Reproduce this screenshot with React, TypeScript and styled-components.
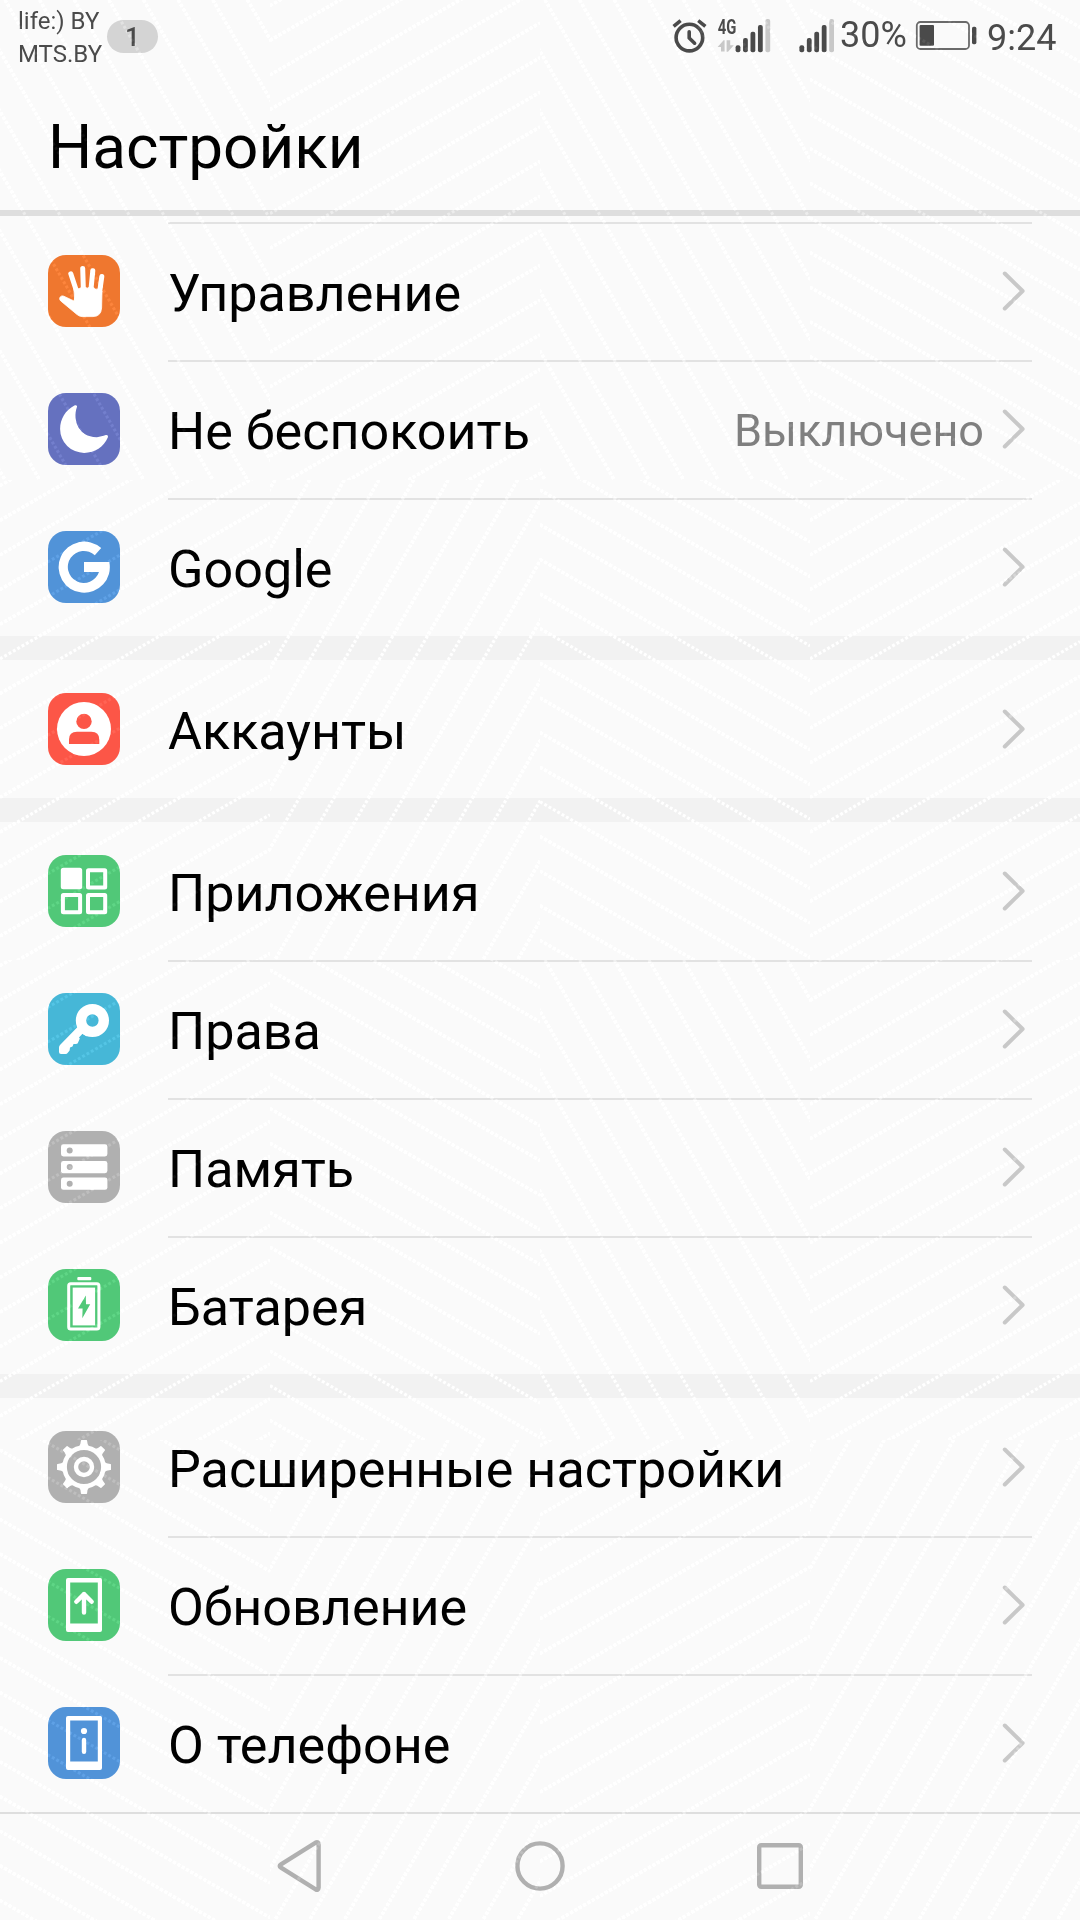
import React from "react";
import styled, { createGlobalStyle } from "styled-components";

const GlobalStyle = createGlobalStyle`
  html, body { margin: 0; padding: 0; background: #fafafa; }
  * { box-sizing: border-box; }
  svg { display: block; flex: none; }
`;

const Screen = styled.div`
  position: relative;
  width: 1080px;
  height: 1920px;
  overflow: hidden;
  display: flex;
  flex-direction: column;
  background: #fafafa;
  font-family: Roboto, "Noto Sans", sans-serif;
  color: #000;
  isolation: isolate;
`;

const StatusBar = styled.header`
  display: flex;
  height: 72px;
  padding: 0 24px 0 18px;
  color: #4a4a4a;
`;

const Carriers = styled.div`
  display: flex;
  flex-direction: column;
  width: 89px;
  padding-top: 5px;
  font-size: 24px;
  line-height: 33px;
  white-space: nowrap;
`;

const CountBadge = styled.div`
  width: 51px;
  height: 33px;
  margin-top: 20px;
  border-radius: 17px;
  background: #d4d4d4;
  font-size: 26px;
  line-height: 34px;
  font-weight: 500;
  text-align: center;
`;

const StatusIcons = styled.div`
  display: flex;
  align-items: flex-start;
  margin-left: auto;
`;

const StatusText = styled.span<{ $top: number; $width: number; $indent?: number }>`
  width: ${(p) => p.$width}px;
  padding-top: ${(p) => p.$top}px;
  padding-left: ${(p) => p.$indent ?? 0}px;
  font-size: 36px;
  line-height: 42px;
  white-space: nowrap;
`;

const TitleBar = styled.div`
  height: 144px;
  padding: 39px 48px 0;
  border-bottom: 6px solid #dedede;
`;

const Title = styled.h1`
  margin: 0;
  font-size: 62px;
  line-height: 72px;
  font-weight: 400;
`;

const List = styled.main`
  display: flex;
  flex-direction: column;
  gap: 24px;
  height: 1596px;
  padding-top: 6px;
  background: linear-gradient(#fafafa, #fafafa) top / 100% 6px no-repeat #f2f2f2;
`;

const Group = styled.section`
  background: #fafafa;
`;

const Row = styled.div`
  display: flex;
  align-items: center;
  height: 138px;
  padding: 0 48px;
`;

const Tile = styled.div<{ $color: string }>`
  width: 72px;
  height: 72px;
  margin-right: 48px;
  border-radius: 18px;
  background: ${(p) => p.$color};
`;

const RowBody = styled.div<{ $divided: boolean }>`
  display: flex;
  align-items: center;
  flex: 1;
  height: 138px;
  padding-right: 7px;
  border-top: 2px solid ${(p) => (p.$divided ? "#e2e2e2" : "transparent")};
`;

const Label = styled.span`
  flex: 1;
  padding-top: 4px;
  font-size: 52.1px;
  line-height: 60px;
  white-space: nowrap;
`;

const Value = styled.span`
  margin-right: 17px;
  padding-top: 2px;
  font-size: 45px;
  line-height: 54px;
  color: #7f7f7f;
`;

const ChevronIcon = styled.svg`
  margin-top: -2px;
`;

const NavBar = styled.nav`
  display: flex;
  justify-content: center;
  align-items: center;
  gap: 190px;
  height: 108px;
  padding-bottom: 2px;
  border-top: 2px solid #dedede;
`;

const Overlay = styled.svg`
  position: absolute;
  inset: 0;
  pointer-events: none;
  mix-blend-mode: plus-lighter;
`;

const W = "#fff";

const glyphs: Record<string, React.ReactNode> = {
  hand: (
    <g fill={W} stroke={W} strokeLinecap="round" strokeLinejoin="round">
      <path strokeWidth="5" fill="none" d="M22.8 18.8 28.5 36M34.7 13.4 35.4 36M44.8 15.8 42.8 36M53.8 21.6 51.5 38" />
      <path strokeWidth="0.8" d="M26.2 33 Q32 34.5 33 32.5 H38 Q39 34 40.5 32.5 H45.5 Q47.5 35 49.5 34 L54 36 53.6 53 Q53 61.5 45 61.6 H34 Q31.5 61.6 29 59.5 L12.7 45.9 C10.3 43.5 12.6 39.8 15.8 41.2 L26.4 46.2 Z" />
    </g>
  ),
  moon: (
    <path fill={W} d="M26.4 12.6 C28.3 11.6 29.6 12.5 28.8 14.6 C24.5 27 30.5 44.5 49 44.2 C52 44.1 54.8 43 57.8 42.1 C59.7 41.7 60.4 43 59.8 44.5 C56 53.8 46.6 59.9 36.2 59.9 A24 24 0 0 1 12.1 36 C12.1 26.5 17.5 17 26.4 12.6Z" />
  ),
  google: (
    <path fill={W} d="M53.2 17 A25.6 25.6 0 1 0 61.3 31 H36 V41 H51 A16 16 0 1 1 46.8 24.3 Z" />
  ),
  account: (
    <>
      <circle cx="36" cy="36" r="27" fill={W} />
      <g fill="#fc5647">
        <circle cx="36" cy="28.4" r="7.7" />
        <path d="M21 51 V46.5 Q21 38.7 29 38.7 H43.3 Q51.3 38.7 51.3 46.5 V51 Z" />
      </g>
    </>
  ),
  apps: (
    <g fill="none" stroke={W} strokeWidth="4">
      <rect x="14.8" y="14.8" width="17.4" height="17.4" rx="0.5" fill={W} />
      <rect x="40" y="15.3" width="17.2" height="17.2" rx="0.5" />
      <rect x="14.9" y="40" width="17.2" height="17.2" rx="0.5" />
      <rect x="40" y="40" width="17.2" height="17.2" rx="0.5" />
    </g>
  ),
  key: (
    <>
      <path fill={W} d="M31 32.5 L12 52 Q11 53 11 54.5 V59 Q11 61 13 61 H17.5 Q19 61 20 59.5 L21.6 57.5 22 54.5 24.5 53.5 25.5 51 H28 Q30 51 30.3 49 L31.8 45.5 31 44.5 34.5 40.8 39 43.5 Z" />
      <circle cx="44.4" cy="27.5" r="11.4" fill="none" stroke={W} strokeWidth="10.4" />
    </>
  ),
  storage: (
    <>
      {[13.3, 30, 46.6].map((y) => (
        <g key={y}>
          <rect x="13" y={y} width="46.4" height="12.2" rx="2.4" fill={W} />
          <circle cx="21.7" cy={y + 6.1} r="3" fill="#b0b0b0" />
        </g>
      ))}
    </>
  ),
  battery: (
    <>
      <rect x="29.3" y="8" width="14" height="3.2" rx="1" fill={W} />
      <rect x="20.7" y="14.8" width="30.2" height="45.2" rx="2" fill="none" stroke={W} strokeWidth="3" />
      <rect x="24.7" y="18.6" width="22.4" height="37.8" fill={W} />
      <path fill="#51c878" d="M37.8 26.6 30 39.4H34.6L34.3 49.2 42.2 35.2H38Z" />
    </>
  ),
  gear: (
    <g fill="none" stroke={W}>
      <circle cx="36" cy="36" r="19.4" strokeWidth="4.6" />
      <circle cx="36" cy="36" r="8" strokeWidth="4.4" />
      {[0, 45, 90, 135, 180, 225, 270, 315].map((a) => (
        <path key={a} transform={`rotate(${a} 36 36)`} fill={W} strokeWidth="1.4" strokeLinejoin="round" d="M31.6 16 Q33.2 14.5 33.6 9.7 H38.4 Q38.8 14.5 40.4 16 Z" />
      ))}
    </g>
  ),
  update: (
    <>
      <path fill={W} fillRule="evenodd" d="M20 9H52Q54 9 54 11V61Q54 63 52 63H20Q18 63 18 61V11Q18 9 20 9ZM22.2 13.4V54.6H49.8V13.4Z" />
      <path fill="none" stroke={W} strokeWidth="4.4" strokeLinecap="round" strokeLinejoin="round" d="M36 43.6V25M28.3 32.8 36 25.1 43.7 32.8" />
    </>
  ),
  about: (
    <>
      <path fill={W} fillRule="evenodd" d="M20 9H52Q54 9 54 11V61Q54 63 52 63H20Q18 63 18 61V11Q18 9 20 9ZM22.2 13.4V54.6H49.8V13.4Z" />
      <circle cx="36" cy="24" r="3.1" fill={W} />
      <path stroke={W} strokeWidth="4.4" strokeLinecap="round" d="M36 33V44.8" />
    </>
  ),
};

interface Item {
  label: string;
  icon: string;
  color: string;
  value?: string;
}

const groups: { topLine?: boolean; items: Item[] }[] = [
  {
    topLine: true,
    items: [
      { label: "Управление", icon: "hand", color: "#ef772f" },
      { label: "Не беспокоить", icon: "moon", color: "#6571bf", value: "Выключено" },
      { label: "Google", icon: "google", color: "#5193d8" },
    ],
  },
  { items: [{ label: "Аккаунты", icon: "account", color: "#fc5647" }] },
  {
    items: [
      { label: "Приложения", icon: "apps", color: "#51c878" },
      { label: "Права", icon: "key", color: "#46b7d7" },
      { label: "Память", icon: "storage", color: "#b0b0b0" },
      { label: "Батарея", icon: "battery", color: "#51c878" },
    ],
  },
  {
    items: [
      { label: "Расширенные настройки", icon: "gear", color: "#b0b0b0" },
      { label: "Обновление", icon: "update", color: "#51c878" },
      { label: "О телефоне", icon: "about", color: "#5193d8" },
    ],
  },
];

const Chevron = () => (
  <ChevronIcon width="24" height="42" viewBox="0 0 24 42">
    <path d="M3.8 3.5 21.6 21 3.8 38.5" fill="none" stroke="#c8c8c8" strokeWidth="4" strokeLinecap="round" strokeLinejoin="round" />
  </ChevronIcon>
);

const SignalBars = ({ x }: { x: number }) => (
  <>
    {[45.3, 38, 31.8, 25, 19].map((top, i) => (
      <rect key={top} x={x + i * 7.45} y={top} width="4.8" height={52.2 - top} rx="2" fill={i === 4 ? "#c8c8c8" : "#4a4a4a"} />
    ))}
  </>
);

const StatusGlyphs = () => (
  <svg width="168" height="72" viewBox="672 0 168 72">
    <g fill="none" stroke="#4a4a4a" strokeWidth="3.6" strokeLinecap="round" strokeLinejoin="round">
      <circle cx="689.4" cy="37.6" r="13.3" />
      <path d="M689.2 31.8V38L694.6 43.2" />
      <path strokeLinecap="butt" d="M673.6 26.4 680.6 20.6M698.2 20.6 705.4 26.4" />
    </g>
    <text x="717.8" y="34" fontFamily="Roboto, sans-serif" fontSize="20" fontWeight="700" fill="#4a4a4a" textLength="18.6" lengthAdjust="spacingAndGlyphs">4G</text>
    <path fill="#c8c8c8" d="M717.6 47 723.6 40.2H724.6V51.6H721V47ZM726.6 40.2H730.2V45.2H733.8L728 51.8H726.6Z" />
    <SignalBars x={735.6} />
    <SignalBars x={799.4} />
  </svg>
);

const BatteryGlyph = () => (
  <svg width="64" height="72" viewBox="914 0 64 72">
    <rect x="916.8" y="22" width="52.2" height="27" rx="3.6" fill="none" stroke="#6a6a6a" strokeWidth="1.8" />
    <rect x="919.6" y="25" width="14.4" height="20.8" rx="1" fill="#4a4a4a" />
    <rect x="972" y="26.8" width="4.4" height="17.4" rx="1.6" fill="#4a4a4a" />
  </svg>
);

type Slope = "flatDown" | "flatUp" | "steepDown" | "steepUp";

const slopes: Slope[][] = [
  ["steepDown", "flatUp", "steepDown", "flatDown"],
  ["flatUp", "steepUp", "flatDown", "flatUp"],
  ["flatUp", "flatDown", "steepDown", "flatUp"],
  ["flatDown", "steepUp", "flatUp", "steepUp"],
];

const STEP = 34.64;
const TAN = 0.57735;

function hatch(kind: Slope): string {
  const out: string[] = [];
  for (let k = -9; k < 26; k++) {
    if (kind === "flatDown") out.push(`M0 ${10 + k * STEP}L270 ${10 + k * STEP + 270 * TAN}`);
    if (kind === "flatUp") out.push(`M0 ${5.7 + k * STEP}L270 ${5.7 + k * STEP - 270 * TAN}`);
    if (kind === "steepDown") out.push(`M${5 + k * STEP} 0L${5 + k * STEP + 480 * TAN} 480`);
    if (kind === "steepUp") out.push(`M${5 + k * STEP} 0L${5 + k * STEP - 480 * TAN} 480`);
  }
  return out.join("");
}

const Texture = () => (
  <Overlay width="1080" height="1920" viewBox="0 0 1080 1920">
    {slopes.map((line, r) =>
      line.map((kind, c) => (
        <svg key={`${r}-${c}`} x={c * 270} y={r * 480} width="270" height="480" overflow="hidden">
          <path d={hatch(kind)} fill="none" stroke="#0e0e0e" strokeWidth="3.1" strokeDasharray="2.9 2.1" />
        </svg>
      )),
    )}
  </Overlay>
);

export default function App() {
  return (
    <Screen>
      <GlobalStyle />
      <StatusBar>
        <Carriers>
          <span>life:) BY</span>
          <span>MTS.BY</span>
        </Carriers>
        <CountBadge>1</CountBadge>
        <StatusIcons>
          <StatusGlyphs />
          <StatusText $top={14} $width={74}>30%</StatusText>
          <BatteryGlyph />
          <StatusText $top={17} $width={78} $indent={9}>9:24</StatusText>
        </StatusIcons>
      </StatusBar>
      <TitleBar>
        <Title>Настройки</Title>
      </TitleBar>
      <List>
        {groups.map((g, gi) => (
          <Group key={gi}>
            {g.items.map((it, i) => (
              <Row key={it.label}>
                <Tile $color={it.color}>
                  <svg width="72" height="72" viewBox="0 0 72 72">{glyphs[it.icon]}</svg>
                </Tile>
                <RowBody $divided={i > 0 || !!g.topLine}>
                  <Label>{it.label}</Label>
                  {it.value && <Value>{it.value}</Value>}
                  <Chevron />
                </RowBody>
              </Row>
            ))}
          </Group>
        ))}
      </List>
      <NavBar>
        <svg width="50" height="54" viewBox="0 0 50 54">
          <path d="M6 25.4 40.6 3.6Q43.4 2.4 43.6 5.4V48.6Q43.4 51.6 40.6 50.4L6 28.6Q3.4 27 6 25.4Z" fill="none" stroke="#b0b0b0" strokeWidth="4.4" />
        </svg>
        <svg width="50" height="54" viewBox="0 0 50 54">
          <circle cx="25" cy="27" r="22.6" fill="none" stroke="#b0b0b0" strokeWidth="4.4" />
        </svg>
        <svg width="50" height="54" viewBox="0 0 50 54">
          <rect x="4.2" y="6.2" width="41.6" height="41.6" rx="2" fill="none" stroke="#b0b0b0" strokeWidth="4.4" />
        </svg>
      </NavBar>
      <Texture />
    </Screen>
  );
}
